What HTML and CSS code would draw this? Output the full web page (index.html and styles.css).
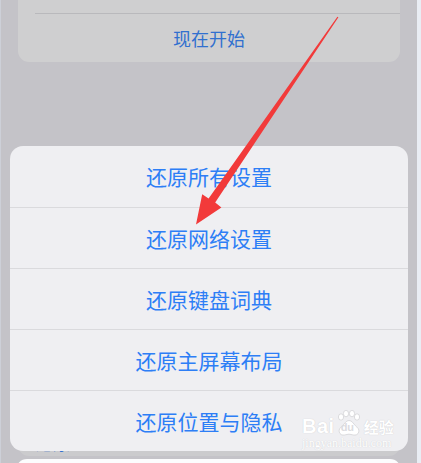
FILE: index.html
```html
<!DOCTYPE html>
<html lang="zh-CN">
<head>
<meta charset="utf-8">
<title>还原</title>
<link rel="stylesheet" href="styles.css">
</head>
<body>
<div class="screen">
  <div class="group top-group">
    <div class="cell cell-blank"></div>
    <div class="cell cell-link">现在开始</div>
  </div>

  <div class="sheet">
    <div class="sheet-row">还原所有设置</div>
    <div class="sheet-row">还原网络设置</div>
    <div class="sheet-row">还原键盘词典</div>
    <div class="sheet-row">还原主屏幕布局</div>
    <div class="sheet-row">还原位置与隐私</div>
  </div>

  <div class="group reset-group">
    <div class="cell cell-link cell-reset">还原</div>
  </div>
  <div class="group next-group"></div>
</div>

<!-- annotation arrow pointing at the network row -->
<svg class="arrow" width="421" height="463" viewBox="0 0 421 463">
  <polygon fill="#f23a3a" points="338.4,17.3 215.2,202.6 221.4,207.4 196,224.5 202.2,194.3 208.6,198.6 337.4,16.7"/>
</svg>

<div class="watermark">
  <div class="wm-logo">
    <span class="wm-bai">Bai</span>
    <span class="wm-paw">
      <svg width="26" height="26" viewBox="0 0 26 26">
        <g fill="#ffffff" stroke="#d3d3d6" stroke-width="0.8">
          <ellipse cx="5" cy="7" rx="2.6" ry="3.2"/>
          <ellipse cx="10" cy="3.6" rx="2.6" ry="3.2"/>
          <ellipse cx="16" cy="3.6" rx="2.6" ry="3.2"/>
          <ellipse cx="21" cy="7" rx="2.6" ry="3.2"/>
          <path d="M13 10.5c-3 0-4.2 3-6.4 5.2C4.5 17.6 2.5 19 3.2 22c.6 2.6 3.2 3.4 5.4 3 2-.3 3-.8 4.4-.8s2.4.5 4.4.8c2.2.4 4.8-.4 5.4-3 .7-3-1.3-4.4-3.4-6.3C17.2 13.5 16 10.5 13 10.5z"/>
        </g>
      </svg>
      <span class="wm-du">du</span>
    </span>
    <span class="wm-jy">经验</span>
  </div>
  <div class="wm-url">jingyan.baidu.com</div>
</div>
</body>
</html>
```

FILE: styles.css
```css
html, body {
  margin: 0;
  padding: 0;
}

body {
  width: 421px;
  height: 463px;
  overflow: hidden;
  position: relative;
  background: #e9edf4;
  font-family: "Noto Sans CJK SC", "Noto Sans", sans-serif;
}

.screen {
  box-sizing: border-box;
  width: 417px;
  height: 463px;
  border-left: 1px solid #cdd0d8;
  background: #c4c3c8;
  overflow: hidden;
}

/* dimmed settings groups behind the sheet */
.group {
  margin-left: 17px;
  width: 382px;
  background: #cfcfd0;
  border-radius: 0 0 11px 11px;
}

.cell-blank {
  height: 13px;
  margin-left: 17px;
  border-bottom: 1px solid #b9b9bc;
}

.cell-link {
  height: 48px;
  line-height: 49px;
  text-align: center;
  font-size: 18px;
  color: #3170cf;
}

.reset-group {
  position: relative;
  margin-top: -22px;
  height: 27px;
  border-radius: 11px;
  background: #cbcbcd;
}

.cell-reset {
  height: 27px;
  line-height: 27px;
  text-align: left;
  padding-left: 18px;
  font-size: 17px;
}

.next-group {
  margin-top: 3px;
  margin-left: 15px;
  width: 385px;
  height: 20px;
  background: #fcfcfd;
  border-radius: 11px 11px 0 0;
}

/* action sheet */
.sheet {
  position: relative;
  z-index: 1;
  margin-top: 84px;
  margin-left: 9px;
  width: 398px;
  background: #efeff2;
  border-radius: 13px;
  overflow: hidden;
}

.sheet-row {
  height: 61px;
  line-height: 61px;
  text-align: center;
  font-size: 21px;
  color: #2d7ef6;
}

.sheet-row + .sheet-row {
  height: 60px;
  line-height: 60px;
  border-top: 1px solid #dadadd;
}

.arrow {
  position: absolute;
  left: 0;
  top: 0;
  z-index: 5;
  pointer-events: none;
}

/* site watermark in the lower right */
.watermark {
  position: absolute;
  left: 302px;
  top: 408px;
  z-index: 4;
  width: 94px;
  color: #ffffff;
}

.wm-logo {
  display: flex;
  align-items: flex-end;
  height: 28px;
}

.wm-bai {
  font-family: "Liberation Sans", Arial, sans-serif;
  font-weight: bold;
  font-size: 20px;
  line-height: 20px;
  letter-spacing: 0.5px;
  text-shadow: 0 0 1px #c4c4c7;
}

.wm-paw {
  position: relative;
  width: 26px;
  height: 26px;
  margin-left: 1px;
}

.wm-paw svg {
  display: block;
}

.wm-du {
  position: absolute;
  left: 5px;
  top: 11px;
  font-family: "Liberation Sans", Arial, sans-serif;
  font-weight: bold;
  font-size: 11px;
  line-height: 12px;
  color: #dcdcdf;
}

.wm-jy {
  margin-left: 2px;
  font-size: 15px;
  line-height: 19px;
  font-weight: bold;
  text-shadow: 0 0 1px #c4c4c7;
}

.wm-url {
  margin-top: 1px;
  font-family: "Liberation Serif", "Times New Roman", serif;
  font-size: 12px;
  line-height: 12px;
  text-shadow: 0 0 1px #c4c4c7;
}
```
